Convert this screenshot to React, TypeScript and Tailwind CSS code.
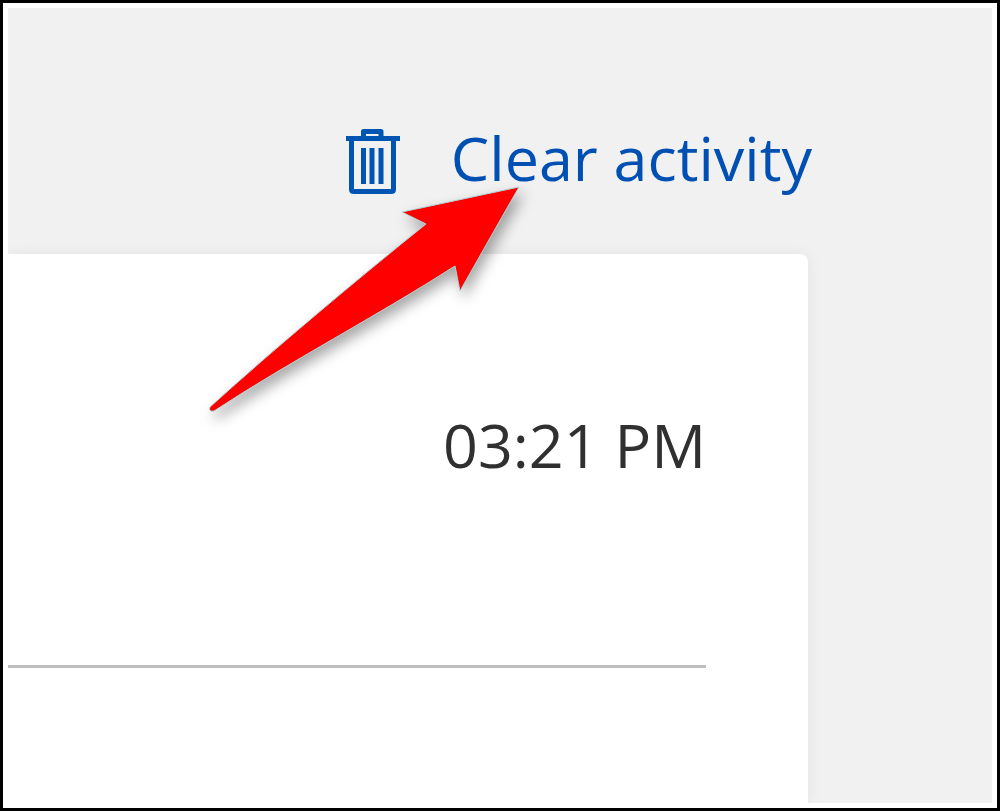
const TrashIcon = () => (
  <svg
    viewBox="0 -8 56 76"
    className="h-[76px] w-14 shrink-0"
    fill="none"
    stroke="#0055b3"
    aria-hidden="true"
  >
    <path d="M18.5 9V3.5H36V9" strokeWidth="5" strokeLinejoin="round" />
    <path d="M1 10.5H55" strokeWidth="5" />
    <path d="M6.500 11V61.5Q6.500 63.5 9 63.5H46Q48.500 63.500 48.500 61.500V11" strokeWidth="5" />
    <path d="M18.500 20V56M27 20V56M36 20V56" strokeWidth="5" />
  </svg>
);

const Arrow = () => (
  <svg
    viewBox="0 0 340 260"
    className="pointer-events-none absolute top-[162px] right-[455px] h-[260px] w-[340px] overflow-visible drop-shadow-[4px_7px_7px_rgba(0,0,0,0.35)]"
    aria-hidden="true"
  >
    <path
      d="M322 17L205 42L229 54C162 108 78 178 13 237Q11 242 17 241C92 192 180 146 258 96L263 121Z"
      fill="#ff0000"
      stroke="#a9d8d8"
      strokeWidth="1"
    />
  </svg>
);

const ActivityPage = () => {
  return (
    <div className="flex min-h-screen border-[3px] border-black bg-white p-[5px] font-['Open_Sans','Noto_Sans',sans-serif]">
      <main className="relative flex flex-1 flex-col overflow-hidden bg-[#f1f1f1]">
        <header className="flex justify-end pt-[106px] pr-[180px] pb-[52px]">
          <button
            type="button"
            className="flex h-[88px] items-center gap-[50px] text-[61px] leading-[88px] whitespace-nowrap text-[#0050b3]"
          >
            <TrashIcon />
            Clear activity
          </button>
        </header>
        <section className="mr-[184px] flex-1 rounded-tr-lg bg-white pr-[102px] shadow-[0_0_16px_rgba(0,0,0,0.06)]">
          <div className="flex h-[414px] justify-end border-b-[3px] border-[#bfbfbf] pt-[147px]">
            <time dateTime="15:21" className="text-[61px] leading-[88px] text-[#303030]">
              03:21 PM
            </time>
          </div>
        </section>
        <Arrow />
      </main>
    </div>
  );
};

export default ActivityPage;
